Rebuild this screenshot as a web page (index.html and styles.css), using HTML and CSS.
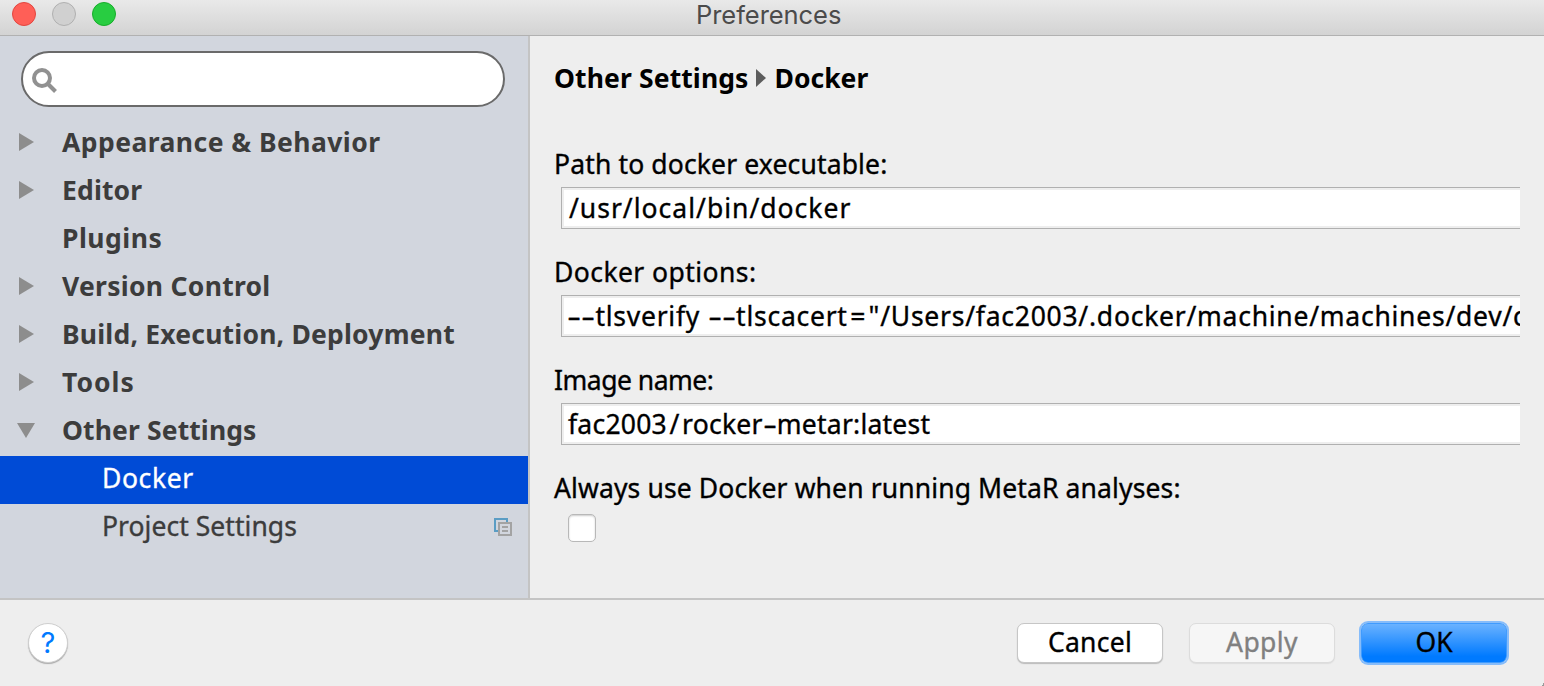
FILE: index.html
```html
<!DOCTYPE html>
<html lang="en">
<head>
<meta charset="utf-8">
<title>Preferences</title>
<link rel="stylesheet" href="styles.css">
</head>
<body>
<div class="window">
  <header class="titlebar">
    <div class="lights"><i class="light close"></i><i class="light minimize"></i><i class="light zoom"></i></div>
    <span class="title">Preferences</span>
  </header>
  <main class="body">
    <aside class="sidebar">
      <div class="search">
        <svg class="search-icon" width="26" height="26" viewBox="0 0 26 26"><circle cx="10" cy="10" r="8" fill="none" stroke="#919191" stroke-width="4"/><path d="M15.5 15.5L23.5 23.5" stroke="#919191" stroke-width="4"/></svg>
      </div>
      <nav class="tree">
        <div class="row"><svg class="arrow" width="18" height="18"><path d="M1 0L16 9L1 18Z"/></svg><span class="ls-app">Appearance &amp; Behavior</span></div>
        <div class="row"><svg class="arrow" width="18" height="18"><path d="M1 0L16 9L1 18Z"/></svg><span class="ls-edi">Editor</span></div>
        <div class="row"><span class="arrow"></span><span class="ls-plu">Plugins</span></div>
        <div class="row"><svg class="arrow" width="18" height="18"><path d="M1 0L16 9L1 18Z"/></svg><span class="ls-ver">Version Control</span></div>
        <div class="row"><svg class="arrow" width="18" height="18"><path d="M1 0L16 9L1 18Z"/></svg><span class="ls-bui">Build, Execution, Deployment</span></div>
        <div class="row"><svg class="arrow" width="18" height="18"><path d="M1 0L16 9L1 18Z"/></svg><span class="ls-too">Tools</span></div>
        <div class="row"><svg class="arrow" width="18" height="18"><path d="M-1 2H17L8 17Z"/></svg><span class="ls-oth">Other Settings</span></div>
        <div class="row child selected"><span class="ls-doc">Docker</span></div>
        <div class="row child"><span class="ls-pro">Project Settings</span>
          <svg class="copy-icon" width="18" height="18" viewBox="0 0 18 18" fill="none" stroke-width="2"><path d="M13 4V1H1V13H4" stroke="#5b9dc4"/><path d="M5 5H17V17H5ZM8 9H14M8 13H14" stroke="#a3a3a3"/></svg>
        </div>
      </nav>
    </aside>
    <section class="content">
      <h1 class="crumbs"><span class="ls-oth">Other Settings</span><svg width="10" height="18"><path d="M0 0L10 9L0 18Z" fill="#5c5c5c"/></svg><span>Docker</span></h1>
      <div class="field"><label><span class="ls-pat">Path to docker executable:</span></label><div class="input"><span class="ls-usr">/usr/local/bin/docker</span></div></div>
      <div class="field"><label><span class="ls-opt">Docker options:</span></label><div class="input flush"><span class="ls-tls"><b class="dash">-</b><b class="dash">-</b>tlsverify <b class="dash">-</b><b class="dash">-</b>tlscacert<span class="wide">=</span>"/Users/fac2003/.docker/machine/machines/dev/c</span></div></div>
      <div class="field"><label><span class="ls-ima">Image name:</span></label><div class="input"><span class="ls-fac">fac2003<span class="wide">/</span>rocker<b class="dash">-</b>metar:latest</span></div></div>
      <div class="field"><label><span class="ls-alw">Always use Docker when running MetaR analyses:</span></label><div class="checkbox"></div></div>
    </section>
  </main>
  <footer class="footer">
    <button class="help">?</button>
    <div class="actions"><button class="btn"><span class="ls-can">Cancel</span></button><button class="btn disabled"><span class="ls-apl">Apply</span></button><button class="btn primary"><span class="ls-ok">OK</span></button></div>
  </footer>
</div>
</body>
</html>
```
FILE: styles.css
```css
* { box-sizing: border-box; }
body { margin: 0; overflow: hidden; font-family: "Noto Sans", sans-serif; font-size: 26.5px; color: #000; -webkit-text-stroke: 0.35px; }
.window { width: 1544px; height: 686px; display: flex; flex-direction: column; background: #eee; }
.titlebar { height: 36px; display: grid; grid-template-columns: 696px 1fr; background: linear-gradient(#e9e9e9, #d3d3d3); border-bottom: 1px solid #b1b1b1; }
.lights { display: flex; gap: 16px; padding: 2px 0 0 12px; }
.light { width: 24px; height: 24px; border-radius: 50%; border: 1px solid; }
.close { background: #ff5f57; border-color: #e2463f; }
.minimize { background: #d0d0d0; border-color: #b0b0b0; }
.zoom { background: #28cd41; border-color: #17ad2a; }
.title { font-family: Inter, sans-serif; font-size: 25.5px; line-height: 30px; color: #4b4b4b; justify-self: start; letter-spacing: -0.05px; -webkit-text-stroke: 0; }
.body { height: 564px; display: grid; grid-template-columns: 530px 1fr; border-bottom: 2px solid #c4c4c4; }
.sidebar { background: #d2d6de; border-right: 2px solid #c4c4c4; padding-top: 15px; }
.search { width: 484px; height: 56px; margin: 0 0 13px 21px; padding: 15px 0 0 11px; border: 2px solid #6a6a6a; border-radius: 28px; background: #fff; }
.search-icon { display: block; margin-left: -2px; }
.tree { font-weight: 700; color: #3c3c3c; -webkit-text-stroke: 0; }
.row { height: 48px; display: flex; align-items: center; padding-left: 18px; line-height: 44px; white-space: nowrap; }
.row span { height: 48px; }
.arrow { width: 18px; margin-right: 26px; margin-top: -4px; fill: #8d8d8d; flex: none; overflow: visible; }
.child { padding-left: 102px; padding-right: 16px; font-weight: 400; justify-content: space-between; -webkit-text-stroke: 0.35px; }
.copy-icon { margin-top: -2px; }
.selected { background: #004bd6; color: #fff; }
.content { padding: 22px 24px 0 24px; overflow: hidden; }
.crumbs { display: flex; align-items: center; margin: 0 0 49px; font-size: inherit; height: 40px; line-height: 40px; -webkit-text-stroke: 0; }
.crumbs svg { margin: 0 9px 0 7px; }
.field { height: 108px; }
.field label { display: block; height: 40px; line-height: 34px; white-space: nowrap; }
.input { height: 42px; margin-left: 7px; padding-left: 6px; border: 1px solid #b0b0b0; border-right: 0; box-shadow: inset 2px 2px #eee, inset 0 -2px #eee; background: #fff; line-height: 40px; overflow: hidden; white-space: nowrap; }
.flush { padding-left: 5px; }
.dash { display: inline-block; width: 14.2px; text-align: center; letter-spacing: 0; font-weight: 400; transform: scaleX(1.6); }
.wide { margin: 0 2.5px; }
.checkbox { width: 28px; height: 28px; margin: 3px 0 0 14px; border: 1px solid #b8b8b8; border-radius: 5px; background: #fff; box-shadow: inset 0 1px 2px #ccc; }
.footer { height: 86px; display: flex; justify-content: space-between; padding: 23px 36px 0 28px; background: linear-gradient(110deg, transparent 50%, #999 50%) right bottom / 2px 4px no-repeat; }
button { font: inherit; padding: 0; border: 1px solid; }
.help { width: 40px; height: 40px; border-radius: 50%; border-color: #cfcfcf; background: #fff; color: #007aff; font-family: Inter, sans-serif; font-size: 29px; line-height: 38px; box-shadow: 0 1px 1px #aaa; -webkit-text-stroke: 0; }
.actions { display: flex; gap: 26px; margin-right: 1px; }
.btn { width: 146px; height: 40px; line-height: 36px; border-radius: 7px; border-color: #c6c6c6; background: #fff; box-shadow: 0 1px 1px #bbb; display: flex; justify-content: center; color: #000; }
.btn.disabled { background: #f6f6f6; border-color: #dcdcdc; color: #808080; box-shadow: 0 1px 1px #ddd; }
.btn.primary { border-color: #409bfd; background: linear-gradient(#6ab2ff, #007aff 85%); box-shadow: 0 0 0 2px #86bcfa; }

/* Tracking per label */
.ls-app { letter-spacing: 0.45px; }
.ls-edi { letter-spacing: 0.15px; }
.ls-plu { letter-spacing: 0.5px; }
.ls-ver { letter-spacing: 0.28px; }
.ls-bui { letter-spacing: 0.2px; }
.ls-too { letter-spacing: 1px; }
.ls-oth { letter-spacing: 0.12px; }
.ls-doc { letter-spacing: 0.6px; }
.ls-pro { letter-spacing: 0.04px; }
.ls-pat { letter-spacing: 0.14px; }
.ls-usr { letter-spacing: 1px; margin-left: 1px; }
.ls-opt { letter-spacing: 0.43px; }
.ls-tls { letter-spacing: 0.75px; }
.ls-ima { letter-spacing: -0.5px; }
.ls-fac { letter-spacing: 0.23px; }
.ls-alw { letter-spacing: 0.12px; }
.ls-can { letter-spacing: 0.25px; }
.ls-apl { letter-spacing: 0.4px; }
```
